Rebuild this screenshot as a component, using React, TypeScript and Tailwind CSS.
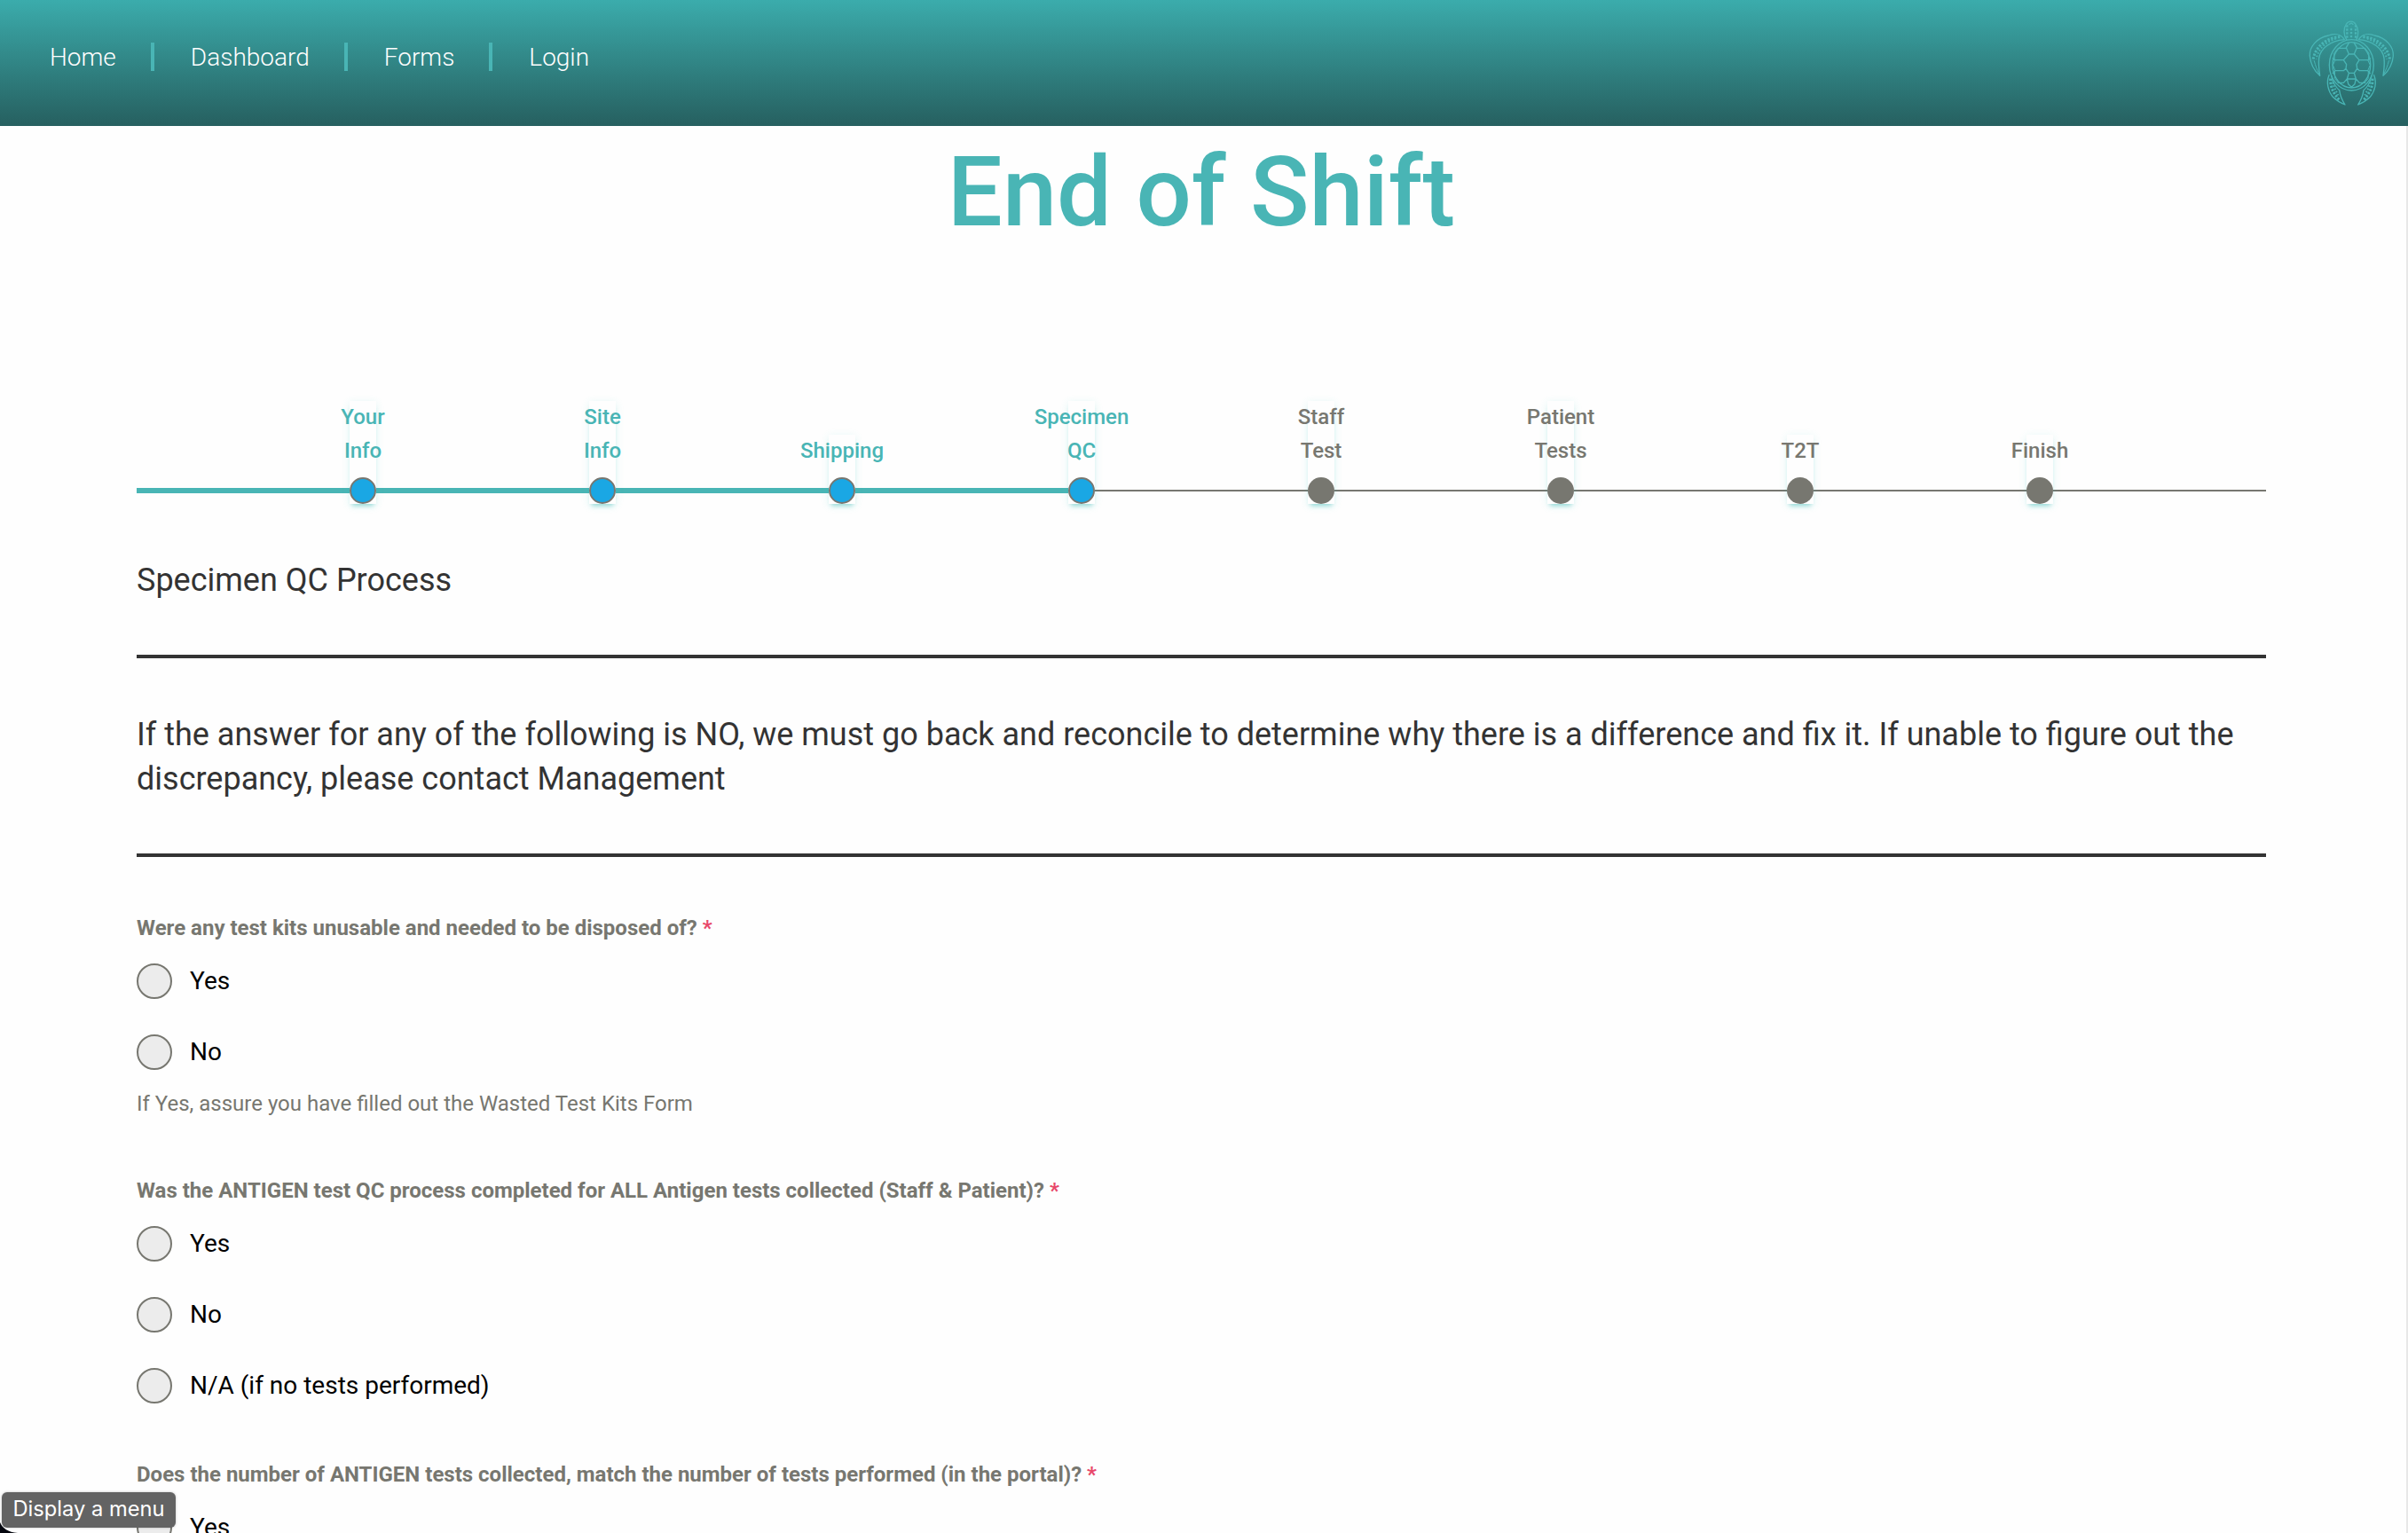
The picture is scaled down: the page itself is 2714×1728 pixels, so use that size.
import React from "react";

const steps = [
  { lines: ["Your", "Info"], done: true },
  { lines: ["Site", "Info"], done: true },
  { lines: ["Shipping"], done: true },
  { lines: ["Specimen", "QC"], done: true },
  { lines: ["Staff", "Test"], done: false },
  { lines: ["Patient", "Tests"], done: false },
  { lines: ["T2T"], done: false },
  { lines: ["Finish"], done: false },
];

/* Left-hand limbs; the right-hand ones are the same drawing mirrored. */
function Limbs() {
  return (
    <g>
      <path d="M127 74C114 53 91 53 73 60C34 68 8 98 10 129C12 155 26 180 44 196C41 176 39 155 41 137C45 105 77 78 127 74Z" />
      <path d="M75 194C65 219 71 247 88 268C101 281 116 289 129 294C117 276 112 260 110 245C101 238 86 219 83 196" />
      <g strokeWidth="9" strokeDasharray="7 5" strokeLinecap="butt">
        <path d="M112 65C70 66 25 97 21 146" />
        <path d="M80 206C79 232 88 255 112 280" />
      </g>
      <g strokeWidth="6" strokeDasharray="5 6" strokeLinecap="butt">
        <path d="M98 71C68 80 38 103 32 140" />
        <path d="M88 218C92 237 98 246 106 262" />
      </g>
      <path d="M25 146C29 162 34 176 42 190" strokeWidth="3" />
    </g>
  );
}

function Turtle() {
  return (
    <svg
      className="mt-5 mr-[14px] h-[100px] w-[100px] shrink-0"
      viewBox="0 0 300 300"
      fill="none"
      stroke="#49b5b5"
      strokeWidth="4"
      strokeLinejoin="round"
      strokeLinecap="round"
    >
      <path d="M134 74C124 58 123 36 133 22C140 9 158 9 165 22C175 36 176 58 168 74" />
      <g strokeWidth="7" strokeDasharray="7 5" strokeLinecap="butt">
        <path d="M136 25v46M165 25v46" />
        <path d="M150 30v42" strokeDashoffset="6" />
      </g>
      <path d="M144 22l6-4 6 4" />
      <ellipse cx="151" cy="160" rx="75" ry="86" />
      <ellipse cx="151" cy="160" rx="64" ry="77" />
      <path d="M142 85L133 101L142 123H160L169 101L160 85M106 103H133M169 103H197M142 123L124 143H94L88 137M160 123L177 143H208L214 137M124 143L134 158L132 172L124 179H96L88 188M177 143L168 158L170 172L178 179H206L214 188M132 172L142 187H160L170 172M142 187L136 207L124 220H106M160 187L166 207L178 220H197M136 207H166L162 224L151 235L140 224L136 207" />
      <path d="M96 143L88 160L96 179M206 143L214 160L206 179M104 104L92 120L94 143M198 104L210 120L208 143M94 181L95 206L106 220M208 181L207 206L196 220" strokeWidth="3" />
      <Limbs />
      <g transform="translate(302 0) scale(-1 1)">
        <Limbs />
      </g>
    </svg>
  );
}

function Radio({ label }: { label: string }) {
  return (
    <div className="flex h-20 items-center gap-5">
      <span className="h-10 w-10 shrink-0 rounded-full border-2 border-[#777770] bg-[#ececec]" />
      <span className="text-[28px] leading-10 text-black">{label}</span>
    </div>
  );
}

function Question({ text, options, hint, className }: { text: string; options: string[]; hint?: string; className: string }) {
  return (
    <section className={className}>
      <h3 className="text-[24px] leading-10 font-bold text-[#777770]">
        {text} <span className="text-[#e8486a]">*</span>
      </h3>
      {options.map((o) => (
        <Radio key={o} label={o} />
      ))}
      {hint && <p className="-mt-0.5 text-[24px] leading-10 text-[#777770]">{hint}</p>}
    </section>
  );
}

export default function App() {
  return (
    <div className="relative flex h-[1728px] w-[2714px] flex-col overflow-hidden bg-[#fefefe] font-['Roboto',sans-serif]">
      <header className="flex h-[142px] shrink-0 items-start justify-between bg-linear-to-b from-[#3bacac] to-[#266060]">
        <nav className="mt-12 flex h-8 items-center pl-14 text-[28px] leading-[34px] font-light text-[#fefefe]">
          <a className="h-8 pr-[39px]">Home</a>
          <a className="h-8 border-l-4 border-[#49b5b5] pr-[39px] pl-[41px]">Dashboard</a>
          <a className="h-8 border-l-4 border-[#49b5b5] pr-[39px] pl-[41px]">Forms</a>
          <a className="h-8 border-l-4 border-[#49b5b5] pr-[39px] pl-[41px]">Login</a>
        </nav>
        <Turtle />
      </header>
      <div className="flex min-h-0 flex-1">
        <main className="w-[2712px] shrink-0 pr-[158px] pl-[154px]">
          <h1 className="h-[154px] text-center text-[110px] leading-[149px] font-medium text-[#49b5b5]">End of Shift</h1>

          <ol className="relative mt-[114px] flex h-[158px] items-end px-[120px]">
            <li className="absolute right-0 bottom-[14px] left-0 h-[2px] bg-[#777770]" />
            <li className="absolute bottom-[12px] left-0 h-[6px] w-[1065px] bg-[#49b5b5]" />
            {steps.map((s) => (
              <li key={s.lines.join(" ")} className="relative flex w-[270px] justify-center">
                <div className="flex w-[30px] flex-col items-center bg-[#fefefe] shadow-[0_2px_10px_rgba(60,200,190,0.16),0_5px_5px_-3px_rgba(40,180,175,0.45)]">
                  {s.lines.map((l) => (
                    <span
                      key={l}
                      className={
                        s.done
                          ? "h-[38px] text-[24px] leading-[36px] font-medium whitespace-nowrap text-[#49b5b5]"
                          : "h-[38px] text-[24px] leading-[36px] font-medium whitespace-nowrap text-[#777770]"
                      }
                    >
                      {l}
                    </span>
                  ))}
                  <span
                    className={
                      s.done
                        ? "mt-[10px] h-[30px] w-[30px] rounded-full border-2 border-[#777770] bg-[#1aa7e4]"
                        : "mt-[10px] h-[30px] w-[30px] rounded-full bg-[#777770]"
                    }
                  />
                </div>
              </li>
            ))}
          </ol>

          <h2 className="mt-[61px] text-[36px] leading-[50px] text-[#333333]">Specimen QC Process</h2>
          <hr className="mt-[59px] border-0 border-t-4 border-[#333333]" />
          <p className="mt-[61px] text-[36px] leading-[50px] text-[#333333]">
            If the answer for any of the following is NO, we must go back and reconcile to determine why there is a difference and fix it. If unable to figure out the
            <br />
            discrepancy, please contact Management
          </p>
          <hr className="mt-[59px] border-0 border-t-4 border-[#333333]" />

          <Question
            className="mt-[60px] h-[296px]"
            text="Were any test kits unusable and needed to be disposed of?"
            options={["Yes", "No"]}
            hint="If Yes, assure you have filled out the Wasted Test Kits Form"
          />
          <Question
            className="h-[320px]"
            text="Was the ANTIGEN test QC process completed for ALL Antigen tests collected (Staff & Patient)?"
            options={["Yes", "No", "N/A (if no tests performed)"]}
          />
          <Question
            className="h-[120px]"
            text="Does the number of ANTIGEN tests collected, match the number of tests performed (in the portal)?"
            options={["Yes"]}
          />
        </main>
        <div className="flex-1 bg-[#e8e8e8]" />
      </div>

      <svg className="absolute bottom-0 left-0 h-3 w-5" viewBox="0 0 20 12">
        <path d="M0 0C3 7 9 11 20 12H0Z" fill="#05070f" />
      </svg>
      <div className="absolute bottom-[6px] left-[2px] flex h-10 w-[196px] items-center justify-center rounded-[6px] bg-[#636363] pb-0.5 font-['Inter',sans-serif] text-[23.7px] text-white shadow-[0_0_3px_rgba(0,0,0,0.25)]">
        Display a menu
      </div>
    </div>
  );
}
